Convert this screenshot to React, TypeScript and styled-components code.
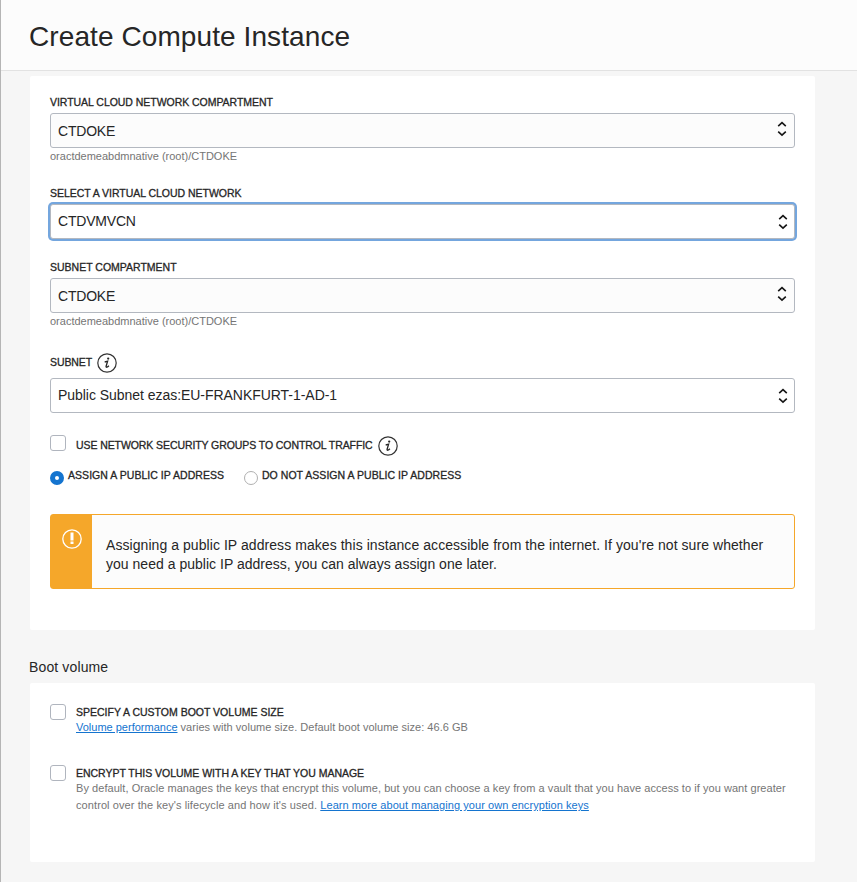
import React from "react";
import styled, { createGlobalStyle } from "styled-components";

const GlobalStyle = createGlobalStyle`
  *, *::before, *::after { box-sizing: border-box; }
  body {
    margin: 0;
    background: #f6f6f6;
    color: #262626;
    font-family: "Liberation Sans", Arial, sans-serif;
    overflow: hidden;
  }
`;

const Page = styled.div`
  height: 882px;
  border-left: 1px solid #b5b5b5;
  background: #f6f6f6;
`;

const Header = styled.header`
  height: 71px;
  padding: 21px 28px 0;
  border-bottom: 1px solid #e2e2e2;
  background: #fcfcfc;
`;

const Title = styled.h1`
  margin: 0;
  font-size: 28px;
  font-weight: 400;
  line-height: 32px;
  letter-spacing: 0.09px;
`;

const Content = styled.main`
  padding: 5px 42px 0 29px;
`;

const Card = styled.section<{ $height: number; $top: number }>`
  height: ${(p) => p.$height}px;
  padding: ${(p) => p.$top}px 20px 0;
  border-radius: 2px;
  background: #fff;
`;

const Field = styled.div<{ $gap: number }>`
  margin-bottom: ${(p) => p.$gap}px;
`;

const LabelRow = styled.div<{ $height?: number; $pad?: number }>`
  display: flex;
  align-items: center;
  height: ${(p) => p.$height ?? 14}px;
  margin-bottom: ${(p) => p.$pad ?? 4}px;
`;

const Label = styled.span<{ $track?: number; $raised?: boolean }>`
  display: block;
  padding-bottom: ${(p) => (p.$raised ? 2 : 0)}px;
  font-size: 10.5px;
  line-height: 14px;
  white-space: nowrap;
  letter-spacing: ${(p) => p.$track ?? 0}px;
  -webkit-text-stroke: 0.3px #262626;
`;

const Select = styled.button<{ $native?: boolean; $focused?: boolean; $track?: number }>`
  display: flex;
  align-items: center;
  justify-content: space-between;
  width: 100%;
  height: 35px;
  padding: 0 ${(p) => (p.$native ? 6 : 7)}px ${(p) => (p.$native ? 2 : 0)}px 7px;
  border: 1px solid #b3b8c0;
  border-radius: 3px;
  background: ${(p) => (p.$native ? "#fff" : "#fcfcfc")};
  box-shadow: ${(p) => (p.$focused ? "0 0 0 2px #74a6de" : "none")};
  color: #262626;
  font: 400 14px/16px "Liberation Sans", Arial, sans-serif;
  letter-spacing: ${(p) => p.$track ?? -0.2}px;
  text-align: left;
`;

const Arrows = styled.svg<{ $native?: boolean }>`
  display: block;
  flex: none;
  margin-top: ${(p) => (p.$native ? 2 : -4)}px;
`;

const Hint = styled.div`
  color: #757575;
  font-size: 11px;
  line-height: 16px;
`;

const Info = styled.svg`
  display: block;
  flex: none;
  margin-left: 5px;
`;

const CheckRow = styled.div`
  display: flex;
  align-items: flex-start;
`;

const Box = styled.span`
  flex: none;
  width: 16px;
  height: 16px;
  margin-right: 10px;
  border: 1px solid #b0b5be;
  border-radius: 3px;
  background: #fff;
`;

const InlineLabel = styled.div`
  display: flex;
  align-items: center;
  height: 20px;
  margin-top: 1px;
`;

const RadioRow = styled.div`
  display: flex;
  margin-top: 12px;
`;

const RadioOption = styled.div<{ $width: number }>`
  display: flex;
  gap: 4px;
  width: ${(p) => p.$width}px;
`;

const Radio = styled.span<{ $checked?: boolean }>`
  flex: none;
  width: 14px;
  height: 14px;
  margin-top: 3px;
  border: ${(p) => (p.$checked ? "5px solid #1474cf" : "1px solid #b0b0b0")};
  border-radius: 50%;
  background: #fff;
`;

const Alert = styled.div`
  display: flex;
  height: 75px;
  margin-top: 29px;
  border: 1px solid #f5a72a;
  border-radius: 3px;
  background: #fcfcfc;
`;

const AlertBand = styled.div`
  display: flex;
  flex: none;
  justify-content: center;
  width: 41px;
  padding: 14px 0 0 1px;
  background: #f5a72a;
`;

const AlertText = styled.p`
  margin: 0;
  padding: 21px 0 0 14px;
  font-size: 14px;
  line-height: 19px;
  white-space: nowrap;
`;

const Tracked = styled.span<{ $track: number }>`
  letter-spacing: ${(p) => p.$track}px;
`;

const SectionTitle = styled.h2`
  height: 53px;
  margin: 0 0 0 -1px;
  padding-top: 29px;
  font-size: 14px;
  font-weight: 400;
  line-height: 16px;
  letter-spacing: 0.13px;
`;

const CheckBody = styled.div`
  padding-top: 1px;
`;

const Description = styled.p<{ $height: number }>`
  height: ${(p) => p.$height}px;
  margin: 0;
  color: #757575;
  font-size: 11px;
  line-height: 17px;
  white-space: nowrap;
`;

const Link = styled.a<{ $track?: number }>`
  color: #1474cf;
  letter-spacing: ${(p) => p.$track ?? 0}px;
  text-decoration: underline;
`;

const SelectArrows = ({ native }: { native?: boolean }) => (
  <Arrows $native={native} width="10" height="16" viewBox="0 0 10 16" fill="none" stroke="#151515" strokeWidth="1.6">
    <path d="M1.2 5.1 5 1.6 8.8 5.1M1.2 10.7 5 14.2 8.8 10.7" />
  </Arrows>
);

const InfoIcon = () => (
  <Info width="20" height="20" viewBox="0 0 20 20" fill="none">
    <circle cx="10" cy="10" r="9.2" stroke="#333" strokeWidth="1.2" />
    <circle cx="11.2" cy="5.6" r="1.15" fill="#262626" />
    <path d="M7.7 9 10.6 8.2 9.1 13.2C8.8 14.7 10 14.6 11.9 12.7" stroke="#262626" strokeWidth="1.3" />
  </Info>
);

export default function App() {
  return (
    <>
      <GlobalStyle />
      <Page>
        <Header>
          <Title>Create Compute Instance</Title>
        </Header>
        <Content>
          <Card $height={554} $top={19}>
            <Field $gap={22}>
              <LabelRow><Label $track={-0.04}>VIRTUAL CLOUD NETWORK COMPARTMENT</Label></LabelRow>
              <Select>CTDOKE<SelectArrows /></Select>
              <Hint>oractdemeabdmnative (root)/CTDOKE</Hint>
            </Field>
            <Field $gap={21}>
              <LabelRow><Label $track={-0.03}>SELECT A VIRTUAL CLOUD NETWORK</Label></LabelRow>
              <Select $native $focused>CTDVMVCN<SelectArrows native /></Select>
            </Field>
            <Field $gap={24}>
              <LabelRow><Label>SUBNET COMPARTMENT</Label></LabelRow>
              <Select>CTDOKE<SelectArrows /></Select>
              <Hint>oractdemeabdmnative (root)/CTDOKE</Hint>
            </Field>
            <Field $gap={22}>
              <LabelRow $height={20} $pad={5}><Label $raised $track={-0.1}>SUBNET</Label><InfoIcon /></LabelRow>
              <Select $native $track={-0.04}>Public Subnet ezas:EU-FRANKFURT-1-AD-1<SelectArrows native /></Select>
            </Field>
            <CheckRow>
              <Box />
              <InlineLabel><Label $raised $track={-0.085}>USE NETWORK SECURITY GROUPS TO CONTROL TRAFFIC</Label><InfoIcon /></InlineLabel>
            </CheckRow>
            <RadioRow>
              <RadioOption $width={194}><Radio $checked /><Label $track={0.04}>ASSIGN A PUBLIC IP ADDRESS</Label></RadioOption>
              <RadioOption $width={220}><Radio /><Label $track={0.04}>DO NOT ASSIGN A PUBLIC IP ADDRESS</Label></RadioOption>
            </RadioRow>
            <Alert>
              <AlertBand>
                <svg width="20" height="20" viewBox="0 0 20 20" fill="none">
                  <circle cx="10" cy="10" r="9.2" stroke="#fff" strokeWidth="1.3" />
                  <path d="M10 3.5V11.4M10 12.6V15" stroke="#fff" strokeWidth="3" />
                </svg>
              </AlertBand>
              <AlertText>
                <Tracked $track={0.062}>Assigning a public IP address makes this instance accessible from the internet. If you're not sure whether</Tracked><br />
                <Tracked $track={0.02}>you need a public IP address, you can always assign one later.</Tracked>
              </AlertText>
            </Alert>
          </Card>
          <SectionTitle>Boot volume</SectionTitle>
          <Card $height={179} $top={21}>
            <CheckRow>
              <Box />
              <CheckBody>
                <Label>SPECIFY A CUSTOM BOOT VOLUME SIZE</Label>
                <Description $height={46}><Link>Volume performance</Link><Tracked $track={0.02}> varies with volume size. Default boot volume size: 46.6 GB</Tracked></Description>
              </CheckBody>
            </CheckRow>
            <CheckRow>
              <Box />
              <CheckBody>
                <Label $track={-0.02}>ENCRYPT THIS VOLUME WITH A KEY THAT YOU MANAGE</Label>
                <Description $height={34}>
                  <Tracked $track={0.05}>By default, Oracle manages the keys that encrypt this volume, but you can choose a key from a vault that you have access to if you want greater</Tracked><br />
                  <Tracked $track={0.09}>control over the key's lifecycle and how it's used. </Tracked><Link $track={0.065}>Learn more about managing your own encryption keys</Link>
                </Description>
              </CheckBody>
            </CheckRow>
          </Card>
        </Content>
      </Page>
    </>
  );
}
